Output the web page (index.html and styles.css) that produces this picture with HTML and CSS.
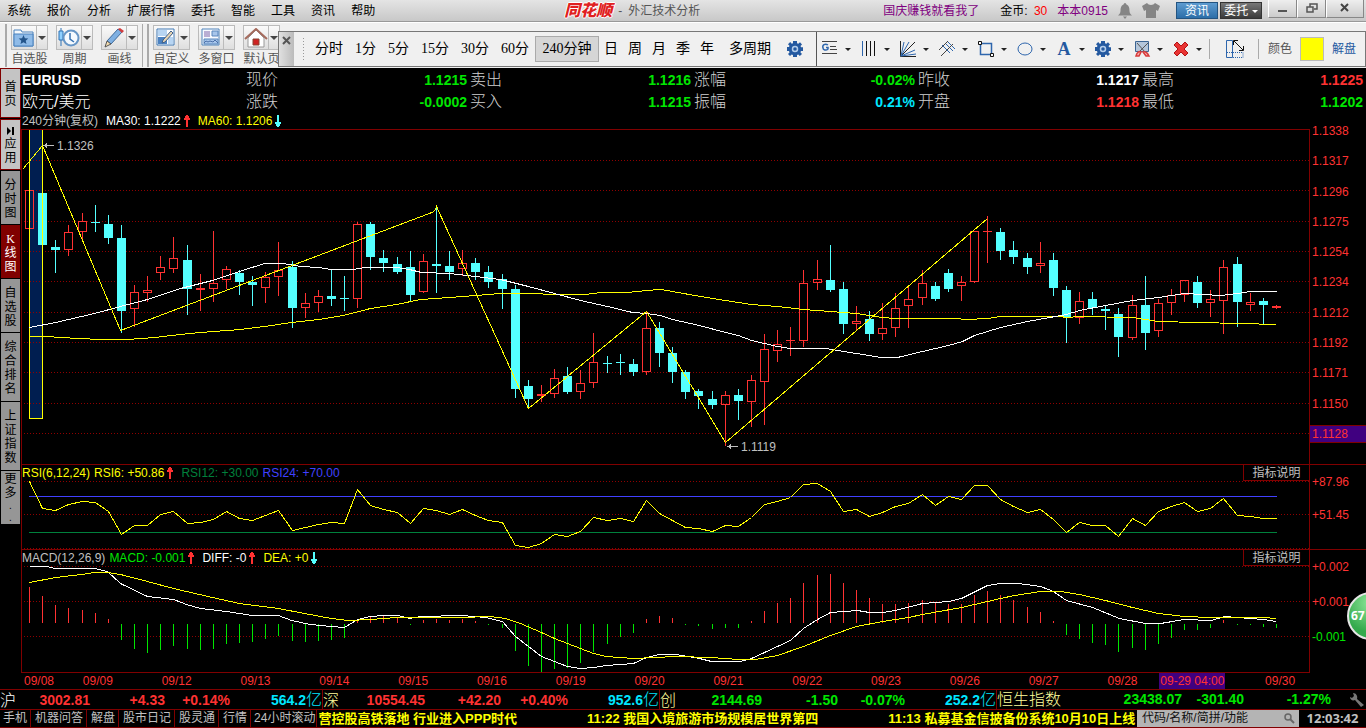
FILE: index.html
```html
<!DOCTYPE html>
<html lang="zh-CN">
<head>
    <meta charset="UTF-8">
    <meta name="viewport" content="width=device-width, initial-scale=1.0">
    <title>同花顺 - 外汇技术分析</title>
    <link rel="stylesheet" href="styles.css">
</head>
<body>
    <svg class="defs" width="0" height="0" aria-hidden="true">
        <symbol id="gear" viewBox="0 0 18 18">
            <path d="M7 1h4v2.200l1.300.5L14 2.200 16 4.400l-1.500 1.500.6 1.300H17v3.800h-2l-.6 1.300L16 14l-2.200 2-1.500-1.500-1.300.5v2H7v-2l-1.300-.5L4 16l-2-2 1.500-1.600L3 11H1V7h2l.5-1.300L2 4.200 4.200 2l1.500 1.700L7 3.200z" fill="#2459a0"/>
            <circle cx="9" cy="9" r="2.500" fill="none" stroke="#b4cdea" stroke-width="1.500"/>
        </symbol>
        <symbol id="up" viewBox="0 0 6 12"><path d="M2 12V5H0V3h1V1h1V0h2v1h1v2h1v2H4v7z" fill="#ff3232"/></symbol>
        <symbol id="down" viewBox="0 0 6 12"><path d="M2 0v7H0v2h1v2h1v1h2v-1h1V9h1V7H4V0z" fill="#54ffff"/></symbol>
    </svg>

    <header class="titlebar">
        <nav class="menu">
            <a href="#">系统</a>
            <a href="#">报价</a>
            <a href="#">分析</a>
            <a href="#">扩展行情</a>
            <a href="#">委托</a>
            <a href="#">智能</a>
            <a href="#">工具</a>
            <a href="#">资讯</a>
            <a href="#">帮助</a>
        </nav>
        <h1 class="title"><span class="logo">同花顺</span> <span>-</span> <span>外汇技术分析</span></h1>
        <div class="account">
            <a href="#" class="promo">国庆赚钱就看我了</a>
            <span class="coins">金币: <b>30</b></span>
            <a href="#" class="user">本本0915</a>
            <svg class="bell" width="14" height="16" viewBox="0 0 14 16"><path d="M7 0c1 0 1 1 1.500 1.500C11 2.500 11.500 5 11.500 8c0 2 1 3 2.500 4.500H0C1.500 11 2.500 10 2.500 8c0-3 .5-5.500 3-6.500C6 1 6 0 7 0zM5 13.500h4L7 16z" fill="#858585"/></svg>
            <svg class="shirt" width="18" height="15" viewBox="0 0 18 15"><path d="M5 0c1.500 2.500 6.500 2.500 8 0l5 3-2 5-2-1v8H4V7L2 8 0 3z" fill="#858585"/></svg>
        </div>
        <button class="tag tag-news">资讯</button>
        <button class="tag tag-trade">委托 <i class="caret"></i></button>
        <div class="window-buttons">
            <button aria-label="最小化"><svg width="10" height="10"><path d="M0 7h9v2H0z" fill="#555"/></svg></button>
            <button aria-label="还原"><svg width="12" height="10"><path d="M1 4h6v5H1zM4 4V1h7v5H8" fill="none" stroke="#555" stroke-width="1.500"/></svg></button>
            <button class="close" aria-label="关闭"><svg width="10" height="10"><path d="M1 1l7 7M8 1L1 8" stroke="#444" stroke-width="2"/></svg></button>
        </div>
    </header>

    <div class="toolbar">
        <div class="tool-group">
            <button class="tool">
                <span class="tool-icon"><svg width="22" height="20" viewBox="0 0 22 20"><path d="M1 2h7l1 2h11v14H1z" fill="#f4f8fc" stroke="#4a82bd"/><path d="M1 6h19v12H1z" fill="#8fbbe8" stroke="#4a82bd"/><path d="M10.500 7l1.400 3.200 3.400.3-2.600 2.200.8 3.300-3-1.800-3 1.800.8-3.300-2.600-2.200 3.400-.3z" fill="#23548a"/></svg></span><i class="caret"></i>
                <span class="tool-name">自选股</span>
            </button>
            <button class="tool">
                <span class="tool-icon"><svg width="22" height="20" viewBox="0 0 22 20"><path d="M3 0v18" stroke="#2e73b5"/><path d="M1 3h4v9H1z" fill="#8ed0ff" stroke="#2e73b5"/><circle cx="13" cy="10" r="7.500" fill="#f5faff" stroke="#6796c6" stroke-width="2"/><path d="M12 5v6l4 3" fill="none" stroke="#3874b3" stroke-width="1.500"/></svg></span><i class="caret"></i>
                <span class="tool-name">周期</span>
            </button>
            <button class="tool">
                <span class="tool-icon"><svg width="22" height="20" viewBox="0 0 22 20"><path d="M4 13L15 1l4 3L8 16z" fill="#7fb0e2" stroke="#3d6a9c"/><path d="M15 1l2-1 4 3-2 2z" fill="#d23c3c"/><path d="M4 13l-2 6 6-3z" fill="#f3dcae" stroke="#555"/></svg></span><i class="caret"></i>
                <span class="tool-name">画线</span>
            </button>
        </div>
        <div class="tool-group">
            <button class="tool">
                <span class="tool-icon"><svg width="20" height="18" viewBox="0 0 20 18"><path d="M1 1h17v16H1z" fill="#fff" stroke="#3f78b5"/><path d="M2 2h9v6H2zM12 9h5v7h-5z" fill="#b7d5f3"/><path d="M2 9h9v7H2z" fill="#4c82c1"/><path d="M7 12l8-9 2 2-8 9-3 1z" fill="#e6d4b4" stroke="#3f5f88"/></svg></span><i class="caret"></i>
                <span class="tool-name">自定义</span>
            </button>
            <button class="tool">
                <span class="tool-icon"><svg width="20" height="18" viewBox="0 0 20 18"><path d="M1 1h17v16H1z" fill="#f8fbff" stroke="#4f83bb"/><path d="M3 4h6M3 6h6M3 8h6" stroke="#7d62a8"/><path d="M11 3h6v5h-6zM3 11h14v5H3z" fill="#a7c6eb" stroke="#5b87bc"/><path d="M3 15l2-2 2 1 2-1 3 1 2-2 3 3" fill="none" stroke="#4b6fa8"/></svg></span><i class="caret"></i>
                <span class="tool-name">多窗口</span>
            </button>
            <button class="tool">
                <span class="tool-icon"><svg width="24" height="20" viewBox="0 0 24 20"><path d="M4 10v9h16v-9l-8-8z" fill="#fff" stroke="#999"/><path d="M1 11L12 1l11 10" fill="none" stroke="#a56a5c" stroke-width="2"/><path d="M9 11h6v6H9z" fill="#cf2222" stroke="#843"/></svg></span><i class="caret"></i>
                <span class="tool-name">默认页</span>
            </button>
        </div>

        <div class="float-bar">
            <button class="float-close" aria-label="关闭工具栏"><svg width="9" height="9"><path d="M1 1l7 7M8 1L1 8" stroke="#555" stroke-width="2"/></svg></button>
            <div class="periods">
                <button>分时</button>
                <button>1分</button>
                <button>5分</button>
                <button>15分</button>
                <button>30分</button>
                <button>60分</button>
                <button class="selected">240分钟</button>
                <button class="single">日</button>
                <button class="single">周</button>
                <button class="single">月</button>
                <button class="single">季</button>
                <button class="single">年</button>
                <button class="multi">多周期</button>
                <button class="setup" aria-label="设置"><svg width="18" height="18"><use href="#gear"/></svg></button>
            </div>
            <div class="drawing">
                <button aria-label="文字线"><svg width="18" height="18"><path d="M1 1.500h15M9 6.500h6M9 9.500h7M1 13.500h15" stroke="#444"/><path d="M7 5c-3-2-6 0-5 3 0 2 3 3 5 1V7.500H5" fill="none" stroke="#2e66ad" stroke-width="1.500"/></svg><i class="caret"></i></button>
                <button aria-label="竖线"><svg width="18" height="18"><path d="M2.500 1v15" stroke="#2e66ad"/><path d="M6.500 1v15M10.500 1v15M14.500 1v15" stroke="#111"/></svg><i class="caret"></i></button>
                <button aria-label="扇形线"><svg width="18" height="18"><path d="M1.500 1v15.500H17M2 16L16 2" fill="none" stroke="#222"/><path d="M2 16L5 2M2 16L10 2M2 16l14-6M2 16l15-2" stroke="#2e66ad"/></svg><i class="caret"></i></button>
                <button aria-label="通道线"><svg width="18" height="18"><path d="M4 5l8 8M7 3l8 8M9 1l8 8" stroke="#2e66ad"/><path d="M1 10L10 1M3 16L15 4" stroke="#444"/></svg><i class="caret"></i></button>
                <button aria-label="矩形"><svg width="18" height="18"><path d="M3.500 3.500h11v11h-11z" fill="none" stroke="#2e66ad" stroke-width="1.500"/><path d="M1.500 1.500h3v3h-3zM13.500 13.500h3v3h-3z" fill="#fff" stroke="#111"/></svg><i class="caret"></i></button>
                <button aria-label="圆"><svg width="18" height="18"><ellipse cx="9" cy="9" rx="7" ry="6" fill="none" stroke="#2e66ad"/></svg><i class="caret"></i></button>
                <button aria-label="文字"><b class="letter">A</b><i class="caret"></i></button>
                <button aria-label="设置"><svg width="18" height="18"><use href="#gear"/></svg><i class="caret"></i></button>
                <button aria-label="剪切"><svg width="18" height="18"><path d="M2.500 1.500h13v10h-13z" fill="#b4c6da" stroke="#3c6593"/><path d="M4 3l8 9M15 3l-9 9" stroke="#555"/><path d="M8 12c-2-1-4 0-5 4h3zM10 12c2-1 4 0 6 4h-3z" fill="#f6b0b0" stroke="#d83a3a" stroke-width="1.500"/></svg><i class="caret"></i></button>
                <button aria-label="删除"><svg width="18" height="18"><path d="M2 5l3-3 4 4 4-4 3 3-4 4 4 4-3 3-4-4-4 4-3-3 4-4z" fill="#e93434" stroke="#b41414"/></svg><i class="caret"></i></button>
            </div>
            <button class="measure" aria-label="区间统计"><svg width="20" height="20" viewBox="0 0 20 20"><path d="M1.500 1.500h6v17h-6z" fill="none" stroke="#2e66ad"/><path d="M2 13.500h16M2 18.500h16V13" fill="none" stroke="#2e66ad" stroke-dasharray="1 1"/><path d="M9 2l9 9M8.500 6V1.500H13M18.500 7v4.500H14" fill="none" stroke="#111"/></svg></button>
            <div class="color-pick">
                <label for="line-color">颜色</label>
                <input type="color" id="line-color" value="#ffff00">
                <a href="#">解盘</a>
            </div>
        </div>
    </div>

    <div class="workspace">
        <nav class="side-tabs">
            <a href="#" class="light">首页</a>
            <a href="#" class="light"><svg width="9" height="8" viewBox="0 0 9 8"><path d="M1 0l4 4-4 4zM6 0h2v8H6z"/></svg>应用</a>
            <a href="#">分时图</a>
            <a href="#" class="current">K线图</a>
            <a href="#">自选股</a>
            <a href="#" class="tall">综合排名</a>
            <a href="#" class="tall">上证指数</a>
            <a href="#" class="more">更多<span>.</span><span>.</span></a>
        </nav>

        <main class="content">
            <dl class="quotes">
                <div class="symbol"><dt>EURUSD</dt><dd>欧元/美元</dd></div>
                <div><dt>现价</dt><dd class="fall">1.1215</dd><dt>涨跌</dt><dd class="fall">-0.0002</dd></div>
                <div><dt>卖出</dt><dd class="fall">1.1216</dd><dt>买入</dt><dd class="fall">1.1215</dd></div>
                <div><dt>涨幅</dt><dd class="fall">-0.02%</dd><dt>振幅</dt><dd class="cyan">0.21%</dd></div>
                <div><dt>昨收</dt><dd class="white">1.1217</dd><dt>开盘</dt><dd class="rise">1.1218</dd></div>
                <div><dt>最高</dt><dd class="rise">1.1225</dd><dt>最低</dt><dd class="fall">1.1202</dd></div>
            </dl>

            <p class="legend">
                <span>240分钟(复权)</span>
                <span class="white ma30">MA30: 1.1222</span><svg width="6" height="12"><use href="#up"/></svg>
                <span class="yellow">MA60: 1.1206</span><svg width="6" height="12"><use href="#down"/></svg>
            </p>

            <section class="panel panel-price">
                <div class="plot"><svg id="price-chart" viewBox="22 130 1287 334" preserveAspectRatio="none"></svg></div>
                <ol class="axis axis-price">
                    <li>1.1338</li>
                    <li>1.1317</li>
                    <li>1.1296</li>
                    <li>1.1275</li>
                    <li>1.1254</li>
                    <li>1.1234</li>
                    <li>1.1212</li>
                    <li>1.1192</li>
                    <li>1.1171</li>
                    <li>1.1150</li>
                    <li><mark>1.1128</mark></li>
                </ol>
            </section>

            <section class="panel">
                <div class="plot">
                    <svg id="rsi-chart" viewBox="22 465 1287 84" preserveAspectRatio="none"></svg>
                    <p class="legend">
                        <span class="yellow">RSI(6,12,24)</span>
                        <span class="yellow">RSI6: +50.86</span><svg width="6" height="12"><use href="#up"/></svg>
                        <span class="green">RSI12: +30.00</span>
                        <span class="blue">RSI24: +70.00</span>
                    </p>
                    <button class="explain">指标说明</button>
                </div>
                <ol class="axis axis-rsi">
                    <li>+87.96</li>
                    <li>+51.45</li>
                </ol>
            </section>

            <section class="panel">
                <div class="plot">
                    <svg id="macd-chart" viewBox="22 550 1287 122" preserveAspectRatio="none"></svg>
                    <p class="legend">
                        <span>MACD(12,26,9)</span>
                        <span class="fall">MACD: -0.001</span><svg width="6" height="12"><use href="#up"/></svg>
                        <span class="white">DIFF: -0</span><svg width="6" height="12"><use href="#up"/></svg>
                        <span class="yellow">DEA: +0</span><svg width="6" height="12"><use href="#down"/></svg>
                    </p>
                    <button class="explain">指标说明</button>
                </div>
                <ol class="axis axis-macd">
                    <li>+0.002</li>
                    <li>+0.001</li>
                    <li class="fall">-0.001</li>
                </ol>
            </section>

            <ol class="dates">
                <li>09/08</li>
                <li>09/09</li>
                <li>09/12</li>
                <li>09/13</li>
                <li>09/14</li>
                <li>09/15</li>
                <li>09/16</li>
                <li>09/19</li>
                <li>09/20</li>
                <li>09/21</li>
                <li>09/22</li>
                <li>09/23</li>
                <li>09/26</li>
                <li>09/27</li>
                <li>09/28</li>
                <li><mark>09-29 04:00</mark></li>
                <li>09/30</li>
            </ol>
        </main>

        <button class="speed-ball">67</button>
    </div>

    <div class="indexes">
        <div class="index first rise"><span class="name hu">沪</span><b>3002.81</b><b>+4.33</b><b>+0.14%</b><span class="amount"><b>564.2</b>亿</span></div>
        <div class="index rise"><span class="name">深</span><b>10554.45</b><b>+42.20</b><b>+0.40%</b><span class="amount"><b>952.6</b>亿</span></div>
        <div class="index fall"><span class="name">创</span><b>2144.69</b><b>-1.50</b><b>-0.07%</b><span class="amount"><b>252.2</b>亿</span></div>
        <div class="index last fall"><span class="name">恒生指数</span><b>23438.07</b><b>-301.40</b><b>-1.27%</b>
            <svg class="wrench" width="14" height="14" viewBox="0 0 14 14"><path d="M3 0l1 3-2 2-2-1c0 3 3 4 5 3l6 7 3-2-7-6c1-3-1-6-4-6z" fill="#777"/></svg>
        </div>
    </div>

    <footer class="ticker">
        <nav class="links">
            <a href="#">手机</a>
            <a href="#">机器问答</a>
            <a href="#">解盘</a>
            <a href="#">股市日记</a>
            <a href="#">股灵通</a>
            <a href="#">行情</a>
            <a href="#">24小时滚动</a>
        </nav>
        <div class="news">
            <span>营控股高铁落地 行业进入PPP时代</span>
            <span>11:22 我国入境旅游市场规模居世界第四</span>
            <span>11:13 私募基金信披备份系统10月10日上线</span>
        </div>
        <div class="search">
            <input type="text" aria-label="搜索" placeholder="代码/名称/简拼/功能">
            <svg width="11" height="11" viewBox="0 0 11 11"><circle cx="4" cy="4" r="3" fill="none" stroke="#666" stroke-width="1.500"/><path d="M6 6l4 4" stroke="#666" stroke-width="2"/></svg>
        </div>
        <time class="clock">12:03:42</time>
    </footer>

    <script src="chart.js"></script>
</body>
</html>
```
FILE: styles.css
```css
* {
    box-sizing: border-box;
}
body {
    margin: 0;
    min-height: 100vh;
    display: flex;
    flex-direction: column;
    overflow: hidden;
    background: #000;
    color: #c0c0c0;
    font: 12px/14px "Liberation Sans", "Noto Sans CJK SC", sans-serif;
}
a {
    color: inherit;
    text-decoration: none;
}
button {
    padding: 0;
    border: 0;
    background: none;
    color: inherit;
    font: inherit;
    white-space: nowrap;
}
ol, dl, dd, p, h1 {
    margin: 0;
    padding: 0;
    list-style: none;
}
mark {
    background: #400080;
    color: #ff3232;
}
.defs {
    position: absolute;
}
.rise { color: #ff3232; }
.fall { color: #00e600; }
.cyan { color: #00e6ff; }
.white { color: #fff; }
.yellow { color: #ffff00; }
.green { color: #00803c; }
.blue { color: #4040ff; }

.caret {
    display: inline-block;
    border: 3px solid transparent;
    border-top-color: #222;
    border-bottom: 0;
}

/* title bar */
.titlebar {
    display: flex;
    align-items: center;
    height: 22px;
    padding-right: 2px;
    border-bottom: 1px solid #999;
    background: linear-gradient(#e4e4e4, #c8c8c8);
    color: #000;
    white-space: nowrap;
}
.menu {
    display: flex;
    gap: 16px;
    padding-left: 7px;
}
.title {
    flex: 1;
    display: flex;
    align-items: center;
    justify-content: center;
    gap: 6px;
    padding-left: 6px;
    color: #555;
    font-size: 12px;
    font-weight: normal;
}
.logo {
    color: #e02020;
    font-size: 16px;
    font-weight: 900;
    font-style: italic;
    text-shadow: 1px 0 #fff, -1px 0 #fff, 0 1px #fff, 0 -1px #fff;
}
.account {
    display: flex;
    align-items: center;
    gap: 10px;
    margin-right: 16px;
}
.promo, .user {
    color: #800080;
}
.promo {
    margin-right: 11px;
}
.coins b {
    margin-left: 3px;
    color: #f00;
    font-weight: normal;
}
.tag {
    width: 42px;
    height: 17px;
    margin-right: 2px;
    border: 1px solid #333;
    color: #fff;
}
.tag-news {
    border-color: #235481;
    background: linear-gradient(#5d9bd0, #2c6ea8);
}
.tag-trade {
    margin-right: 6px;
    background: linear-gradient(#777, #3a3a3a);
}
.tag-trade .caret {
    border-top-color: #fff;
    vertical-align: middle;
}
.window-buttons {
    display: flex;
    align-self: flex-start;
}
.window-buttons button {
    width: 29px;
    height: 18px;
    border: 1px solid #888;
    border-top: 0;
    border-left-color: #fff;
    background: linear-gradient(#eee, #ccc);
}
.window-buttons .close {
    width: 38px;
}

/* toolbars */
.toolbar {
    display: flex;
    height: 46px;
    border-top: 1px solid #fff;
    background: #f0f0f0;
    color: #555;
}
.tool-group {
    display: flex;
    gap: 8px;
    height: 43px;
    margin: 1px 0 0 5px;
    padding: 1px 4px 0;
    border-left: 2px solid #aaa;
    border-right: 1px solid #aaa;
}
.tool-group + .tool-group {
    margin-left: 4px;
    padding-right: 0;
    border-right: 0;
}
.tool {
    display: grid;
    grid-template-columns: 25px 12px;
    grid-template-rows: 25px 18px;
    align-items: center;
    justify-items: center;
    width: 37px;
}
.tool::before {
    content: "";
    grid-area: 1 / 1 / 2 / 3;
    align-self: stretch;
    justify-self: stretch;
    border: 1px solid #bbb;
    background: linear-gradient(90deg, transparent 24px, #bbb 24px, #bbb 25px, transparent 25px), linear-gradient(#fafafa, #dedede);
}
.tool-icon {
    grid-area: 1 / 1;
    height: 20px;
}
.tool .caret {
    grid-area: 1 / 2;
    border-width: 4px 4px 0;
    border-top-color: #444;
}
.tool-name {
    grid-area: 2 / 1 / 3 / 3;
}
.float-bar {
    z-index: 1;
    flex: 1;
    display: flex;
    align-items: center;
    margin: 8px 0 1px -2px;
    border: 1px solid #777;
    background: #f0f0f0;
}
.float-close {
    align-self: stretch;
    width: 15px;
    padding-bottom: 16px;
    background: linear-gradient(90deg, #e0e0e0, #bbb);
}
.periods {
    display: flex;
    align-items: center;
    align-self: stretch;
    margin-left: 8px;
    padding: 0 12px 0 0;
    border-right: 1px solid #555;
    color: #000;
    font: 14px/24px "Liberation Serif", "Noto Sans CJK SC", serif;
}
.periods::before {
    content: "";
    width: 3px;
    height: 25px;
    margin-right: 4px;
    background: radial-gradient(#999 1px, transparent 1px) 0 0 / 3px 3px;
}
.periods button {
    padding: 0 6px;
}
.periods .selected {
    width: 64px;
    border: 1px solid #aaa;
    background: #d6d6d6;
}
.periods .single {
    padding: 0 5px;
}
.periods .multi {
    margin-left: 4px;
}
.periods .setup {
    height: 18px;
    margin-left: 9px;
    padding: 0;
}
.drawing {
    display: flex;
}
.drawing button {
    display: flex;
    align-items: center;
    gap: 6px;
    width: 39px;
    padding-left: 4px;
}
.letter {
    width: 18px;
    color: #2459a0;
    font: bold 18px/18px "Liberation Serif", serif;
}
.measure {
    height: 20px;
    margin: 0 13px 0 2px;
    padding: 0 13px 0 15px;
    border: 1px solid #aaa;
    border-width: 0 1px;
}
.color-pick {
    display: flex;
    align-items: center;
    gap: 8px;
    margin-left: -4px;
}
.color-pick input {
    width: 24px;
    height: 24px;
    padding: 0;
    border: 1px solid #bbb;
    background: #ff0;
}
.color-pick input::-webkit-color-swatch-wrapper {
    padding: 0;
}
.color-pick input::-webkit-color-swatch {
    border: 0;
}
.color-pick a {
    color: #2459a0;
}

/* left tabs */
.workspace {
    position: relative;
    flex: 1;
    display: flex;
    overflow: hidden;
}
.side-tabs {
    width: 21px;
}
.side-tabs a {
    display: flex;
    flex-direction: column;
    align-items: center;
    justify-content: center;
    height: 53px;
    margin: 0 1px 1px;
    padding: 2px 3px 0;
    background: #969696;
    color: #000;
    text-align: center;
    word-break: break-all;
}
.side-tabs .light {
    height: 51px;
    margin: 0 0 1px;
    border: 1px solid #800000;
    background: #c4c4c4;
}
.side-tabs .light:first-child {
    height: 50px;
}
.side-tabs .tall {
    height: 68px;
}
.side-tabs .current {
    background: #800000;
    color: #fff;
    font-family: "Liberation Serif", "Noto Sans CJK SC", serif;
}
.side-tabs svg {
    margin-bottom: 2px;
}
.side-tabs .more {
    padding-top: 0;
}
.more span {
    font-size: 10px;
    line-height: 12px;
}

/* quote header */
.content {
    flex: 1;
    min-width: 0;
    display: grid;
    grid-template-columns: 1fr;
    grid-template-rows: 45px 16px 335fr 85fr 123fr 17px;
}
.quotes {
    display: grid;
    grid-template-columns: repeat(6, 1fr);
    padding: 1px 0 0 1px;
    font-size: 16px;
    line-height: 22px;
}
.quotes div {
    display: grid;
    grid-template-columns: auto 1fr;
    padding-right: 3px;
}
.quotes dt {
    color: #d0d0d0;
    font-weight: 300;
}
.quotes dd {
    text-align: right;
    font-size: 14px;
    font-weight: bold;
}
.quotes .symbol {
    display: block;
}
.quotes .symbol dt {
    color: #fff;
    font-size: 14px;
    font-weight: bold;
}
.quotes .symbol dd {
    color: #fff;
    text-align: left;
    font-size: 16px;
    font-weight: 300;
}
.legend {
    display: flex;
    align-items: center;
    gap: 4px;
    height: 16px;
    padding-left: 1px;
    white-space: nowrap;
}
.legend svg {
    margin: 0 4px 0 -1px;
}
.ma30 {
    margin-left: 4px;
}

/* chart panels */
.panel {
    display: grid;
    grid-template-columns: 1fr 56px;
    min-height: 0;
    border-top: 1px solid #800000;
}
.panel-price {
    border-top: 0;
}
.plot {
    position: relative;
    min-height: 0;
    border: 1px solid #800000;
    border-width: 0 1px;
}
.panel-price .plot {
    border-top-width: 1px;
}
.plot > svg {
    position: absolute;
    width: 100%;
    height: 100%;
    shape-rendering: crispEdges;
}
.plot .legend {
    position: absolute;
    padding-left: 0;
}
.explain {
    position: absolute;
    top: 0;
    right: 0;
    width: 66px;
    height: 16px;
    border: 1px solid #800000;
    border-width: 0 0 1px 1px;
    background: #000;
}
.axis {
    display: grid;
    align-items: center;
    padding-left: 2px;
    color: #ff3232;
}
.axis-price {
    grid-template-rows: repeat(11, 1fr);
    margin: -13px 0 15px;
}
.axis-price mark {
    display: block;
    margin-left: -2px;
    padding: 1px 2px;
    border: 1px solid #800000;
    border-width: 1px 0;
}
.axis-rsi {
    grid-template-rows: 33fr 33fr 18fr;
}
.axis-macd {
    grid-template-rows: 34fr 35fr 35fr 18fr;
}
.dates {
    display: grid;
    grid-template-columns: 59fr repeat(13, 79fr) 52fr 106fr 45fr;
    margin-right: 56px;
    padding-left: 3px;
    border-top: 1px solid #800000;
    color: #ff3232;
    line-height: 16px;
    white-space: nowrap;
}
.dates li {
    min-width: 0;
}
.dates mark {
    display: inline-block;
    padding: 0 1px;
}
.speed-ball {
    position: absolute;
    top: 524px;
    right: -29px;
    width: 48px;
    height: 48px;
    padding-left: 2px;
    border: 2px solid #e6e6e6;
    border-radius: 50%;
    background: radial-gradient(circle at 50% 20%, #8fe89a, #34a94c 70%);
    color: #fff;
    text-align: left;
    font: bold 12px/14px "Noto Sans", sans-serif;
}

/* index quotes */
.indexes {
    display: flex;
    height: 20px;
    border-top: 1px solid #800000;
}
.index {
    flex: 336;
    display: grid;
    grid-template-columns: 102fr 76fr 67fr 91fr;
    align-items: center;
    border-right: 1px solid #800000;
    font-size: 14px;
    line-height: 19px;
    text-align: right;
}
.index.first {
    flex: 322;
    grid-template-columns: 90fr 75fr 65fr 92fr;
}
.index.last {
    flex: 369;
    grid-template-columns: 185fr 62fr 87fr 35fr;
    border-right: 0;
}
.name {
    grid-area: 1 / 1;
    color: #ffff9c;
    font-size: 16px;
    font-weight: 300;
    text-align: left;
}
.hu {
    color: #fff;
}
.name + b {
    grid-area: 1 / 1;
}
.amount {
    color: #00e6ff;
    font-size: 16px;
    font-weight: 300;
}
.amount b {
    font-size: 14px;
    font-weight: 700;
}
.wrench {
    justify-self: center;
    margin-left: 16px;
}

/* news ticker */
.ticker {
    display: flex;
    height: 19px;
    border: 1px solid #800000;
    border-width: 1px 0;
    line-height: 17px;
    white-space: nowrap;
}
.links {
    display: flex;
}
.links a {
    padding: 0 3px 0 4px;
    border-right: 1px solid #800000;
}
.links a:first-child {
    padding-left: 3px;
}
.links a:last-child {
    padding: 0 1px 0 3px;
}
.news {
    flex: 1;
    display: flex;
    gap: 70px;
    min-width: 0;
    overflow: hidden;
    padding-left: 1px;
    color: #ffff00;
    font-size: 13px;
    font-weight: bold;
}
.search {
    display: flex;
    align-items: center;
    width: 162px;
    padding: 0 4px 0 5px;
    background: #b4b4b4;
}
.search input {
    flex: 1;
    min-width: 0;
    padding: 0;
    border: 0;
    background: none;
    font: inherit;
}
.search input::placeholder {
    color: #111;
}
.clock {
    width: 67px;
    text-align: center;
    font: bold 13px/17px "Noto Sans", sans-serif;
}
```
FILE: chart.js
```js
const SVG_NS = 'http://www.w3.org/2000/svg';
const RED = '#ff3232';
const CYAN = '#54ffff';
const GREEN = '#00e600';

// one row per bar: high, body top, body bottom, low, 1 = up / 0 = down
const candles = [
    [190,190,229,229,1],[193,193,245,245,0],[240,247,250,273,0],[225,232,250,256,1],[213,221,232,239,1],
    [205,222,223,232,0],[215,224,238,244,0],[225,238,311,333,0],[285,292,309,327,1],[276,290,293,302,1],
    [256,267,273,280,1],[237,258,269,273,1],[245,260,289,315,0],[274,288,290,311,1],[231,283,289,302,1],
    [266,269,280,289,1],[270,273,282,295,0],[276,282,285,306,0],[272,277,288,303,1],[242,270,277,296,1],
    [261,267,308,328,0],[293,303,308,318,1],[290,296,303,312,1],[270,296,299,306,0],[276,298,299,311,0],
    [222,224,299,308,1],[222,224,257,270,0],[250,258,263,272,0],[257,264,272,274,0],[251,267,295,302,0],
    [254,261,292,293,1],[208,264,266,293,0],[251,266,272,280,0],[250,263,269,276,1],[258,263,272,280,0],
    [266,272,282,288,0],[274,279,289,309,0],[285,289,389,398,0],[380,386,399,408,0],[385,394,396,402,1],
    [369,378,394,398,1],[367,376,392,394,0],[370,383,392,399,1],[333,362,383,388,1],[356,363,364,373,0],
    [354,362,363,375,0],[359,364,372,376,0],[312,328,372,375,1],[322,328,353,367,0],[347,353,372,383,0],
    [370,372,392,399,0],[389,391,396,409,0],[391,399,405,409,0],[391,395,405,446,1],[389,395,401,420,0],
    [375,380,402,427,1],[334,349,382,425,1],[330,344,351,362,1],[327,340,341,356,1],[270,283,341,347,1],
    [260,279,283,290,1],[245,280,290,292,0],[282,289,324,334,0],[306,321,324,330,1],[311,319,334,341,0],
    [303,328,334,340,1],[293,308,328,337,1],[286,299,306,328,1],[270,283,298,305,1],[282,286,299,301,0],
    [269,273,289,292,0],[276,282,286,301,1],[231,231,282,283,1],[216,231,232,263,1],[228,232,251,260,0],
    [241,250,257,264,0],[253,258,267,274,0],[242,263,266,273,1],[253,260,288,296,0],[286,290,317,343,0],
    [292,301,318,324,1],[292,299,308,315,0],[305,309,311,330,0],[308,314,337,357,0],[295,305,338,340,1],
    [276,305,333,350,0],[299,303,331,337,1],[289,295,303,315,1],[280,280,295,302,1],[276,282,303,308,0],
    [290,299,303,317,1],[260,267,301,334,1],[257,264,302,327,0],[293,302,305,311,1],[298,301,305,325,0],
    [305,306,308,309,1]
];

const ma30 = '29,327 55,322 94,313 120,306 147,299 180,288 212,280 239,271 264,263 282,263 300,266 318,267 331,269 352,269 365,267 396,267 409,269 421,272 449,273 475,276 500,279 528,286 554,293 580,300 607,306 632,312 646,313 660,315 672,319 699,325 725,332 738,335 751,340 777,346 790,348 825,348 843,351 869,355 880,357 897,357 922,351 948,345 962,341 974,335 1000,327 1027,321 1066,314 1079,310 1105,305 1132,300 1158,297 1184,293 1220,295 1237,293 1250,291 1276,291';
const ma60 = '29,336 46,336 77,338 101,339 127,339 154,337 180,334 200,332 240,329 264,326 291,322 318,319 343,315 370,308 396,304 420,299 449,297 475,295 500,293 585,294 600,292 627,292 646,290 660,289 672,291 700,296 725,300 751,304 777,306 803,309 830,311 856,313 869,315 882,317 895,318 955,318 966,319 987,318 1000,316 1060,316 1066,317 1079,316 1132,317 1145,319 1158,321 1197,322 1240,323 1276,324';
const zigzag = '22,169 42,145 120,330 434,211 436,206 528,408 646,311 725,442 987,218';

const rsi6 = [
    481,508,510,504,501,502,511,534,525,525,514,511,523,522,519,511,518,520,515,510,530,527,524,522,
    523,489,505,509,512,523,508,510,514,509,515,520,522,545,547,543,534,536,531,517,520,518,521,500,
    513,520,527,528,531,525,526,517,504,501,497,484,483,491,511,509,516,512,506,503,494,505,496,499,
    485,485,499,506,512,509,519,532,522,525,525,536,518,525,511,506,502,511,508,498,515,516,518,518
];

// end of every histogram bar, the zero line is 623
const macd = [
    587,596,605,608,610,613,619,640,649,653,650,646,649,650,649,644,643,642,639,636,641,642,641,640,
    638,619,617,616,618,624,620,619,620,619,621,625,628,651,666,672,669,668,663,652,644,637,633,619,
    616,618,624,626,629,628,628,621,611,603,598,583,575,574,583,590,598,604,604,603,600,602,604,604,
    595,591,595,600,607,612,621,635,639,643,645,652,648,650,644,638,630,630,628,620,624,625,627,628
];
const diff = '29,566 46,566 55,568 94,568 107,571 120,583 147,596 173,599 186,604 200,608 226,611 252,615 278,615 291,620 310,624 331,626 344,627 357,619 370,616 383,615 398,615 409,618 420,616 462,615 485,617 502,621 515,636 541,656 554,661 567,666 580,668 593,667 606,665 633,663 646,657 659,654 675,654 699,658 711,661 740,661 751,658 764,652 790,640 803,628 817,619 830,612 857,610 869,612 882,612 895,610 922,603 948,601 961,598 987,585 1000,583 1018,583 1040,586 1053,591 1066,600 1092,607 1119,618 1145,623 1160,623 1184,619 1211,620 1224,616 1263,619 1276,621';
const dea = '29,582 55,577 81,574 94,572 107,572 120,574 147,581 173,588 212,597 239,603 278,608 304,613 331,618 348,620 370,619 396,617 460,617 490,616 505,618 520,623 541,632 554,638 567,643 593,653 606,656 633,658 675,656 711,657 738,659 755,659 777,655 803,646 830,635 856,626 882,621 908,617 922,614 961,607 1000,598 1014,595 1040,591 1060,591 1079,594 1105,600 1132,607 1158,613 1184,616 1210,617 1263,617 1276,618';

function barX(i) {
    return Math.round(29 + i * 1247 / 95);
}

function add(svg, tag, attrs) {
    const el = document.createElementNS(SVG_NS, tag);
    for (const key in attrs) {
        el.setAttribute(key, attrs[key]);
    }
    svg.appendChild(el);
    return el;
}

function rect(svg, x, y, width, height, fill) {
    return add(svg, 'rect', { x, y, width, height, fill });
}

function line(svg, points, stroke) {
    add(svg, 'polyline', { points, stroke, fill: 'none', transform: 'translate(0.5 0.5)' });
}

function grid(svg, rows) {
    rows.forEach(y => add(svg, 'path', {
        d: `M24 ${y + 0.5}H1309`, stroke: '#900000', 'stroke-dasharray': '1 2'
    }));
}

function note(svg, x, y, text) {
    add(svg, 'path', { d: `M${x} ${y + 0.5}h11M${x + 3.5} ${y - 2}v5M${x + 2.5} ${y - 1}v3`, stroke: '#c0c0c0' });
    add(svg, 'text', { x: x + 14, y: y + 5, fill: '#c0c0c0' }).textContent = text;
}

function drawPrice() {
    const svg = document.getElementById('price-chart');
    // selected range
    rect(svg, 29, 128, 14, 291, '#001e50');
    grid(svg, [160, 190, 221, 251, 281, 312, 342, 372, 403, 433]);

    candles.forEach(([high, top, bottom, low, up], i) => {
        const x = barX(i);
        const color = up ? RED : CYAN;
        if (up && bottom - top > 2) {
            rect(svg, x, high, 1, top - high, color);
            rect(svg, x, bottom, 1, low - bottom, color);
            add(svg, 'rect', { x: x - 3.5, y: top + 0.5, width: 8, height: bottom - top - 1, fill: 'none', stroke: color });
        } else {
            rect(svg, x, high, 1, low - high, color);
            rect(svg, x - 4, top, 9, bottom - top, color);
        }
    });

    line(svg, '29,128 29,418 42,418 42,128', '#ffff00');
    line(svg, ma60, '#ffff00');
    line(svg, ma30, '#ffffff');
    line(svg, zigzag, '#ffff00');
    note(svg, 43, 145, '1.1326');
    note(svg, 727, 446, '1.1119');
}

function drawRsi() {
    const svg = document.getElementById('rsi-chart');
    grid(svg, [481, 514, 548]);
    rect(svg, 29, 496, 1248, 1, '#4040ff');
    rect(svg, 29, 532, 1248, 1, '#00803c');
    line(svg, rsi6.map((y, i) => barX(i) + ',' + y).join(' '), '#ffff00');
}

function drawMacd() {
    const svg = document.getElementById('macd-chart');
    grid(svg, [566, 601, 636]);
    macd.forEach((y, i) => {
        if (y < 623) {
            rect(svg, barX(i), y, 1, 623 - y, RED);
        } else {
            rect(svg, barX(i), 624, 1, Math.max(1, y - 624), GREEN);
        }
    });
    line(svg, diff, '#ffffff');
    line(svg, dea, '#ffff00');
}

drawPrice();
drawRsi();
drawMacd();
```
